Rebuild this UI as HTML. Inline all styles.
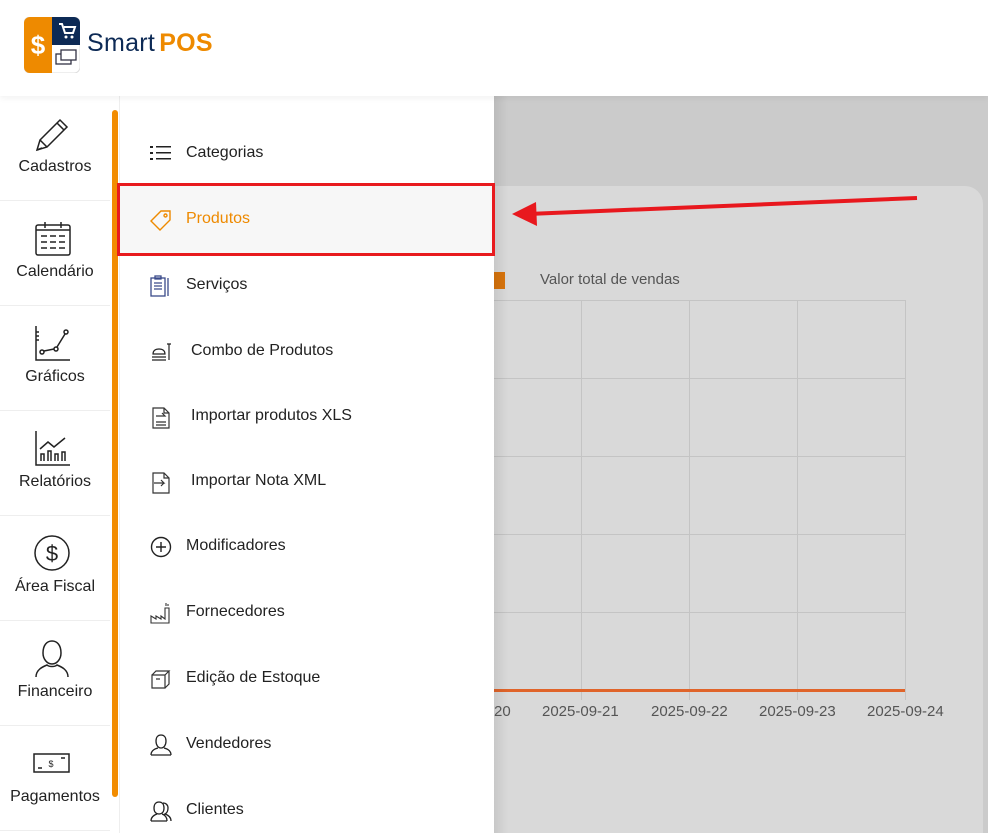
<!DOCTYPE html>
<html><head><meta charset="utf-8"><style>
*{margin:0;padding:0;box-sizing:border-box}
html{overflow:hidden}
body{width:988px;height:833px;overflow:hidden;background:#cbcbcb;font-family:"Liberation Sans",sans-serif;position:relative}
.hdr{position:absolute;left:0;top:0;width:988px;height:96px;background:#fff;box-shadow:0 2px 6px rgba(0,0,0,.06);z-index:3}
.side{position:absolute;left:0;top:96px;width:120px;height:737px;background:#fff;z-index:2;border-right:1px solid #eee}
.si{position:absolute;left:0;width:110px;height:105px;border-bottom:1px solid #eee;text-align:center;color:#222;font-size:16px}
.si svg{position:absolute;left:33px;top:18px}
.si span{position:absolute;left:0;right:0;top:62px}
.bar{position:absolute;left:112px;top:14px;width:6px;height:687px;background:#f28c00;border-radius:3px}
.sub{position:absolute;left:120px;top:96px;width:374px;height:737px;background:#fff;z-index:2}
.it{position:absolute;left:0;width:374px;height:66px;font-size:16px;color:#222}
.it svg{position:absolute;left:30px;top:23px}
.it span{position:absolute;left:66px;top:24px}
.card{position:absolute;left:300px;top:186px;width:683px;height:647px;background:#d9d9d9;border-radius:18px 18px 0 0}
.shade{position:absolute;left:494px;top:96px;width:14px;height:737px;background:linear-gradient(90deg,rgba(0,0,0,.08),rgba(0,0,0,0));z-index:1}
.lbl{position:absolute;font-size:15px;color:#555;z-index:1}
</style></head><body>
<div class="hdr">
 <svg style="position:absolute;left:24px;top:17px" width="56" height="56" viewBox="0 0 56 56">
  <rect x="0" y="0" width="56" height="56" rx="6" fill="#fff" stroke="#ddd"/>
  <path d="M6 0H28V56H6A6 6 0 0 1 0 50V6A6 6 0 0 1 6 0Z" fill="#ee8a00"/>
  <path d="M28 0H50A6 6 0 0 1 56 6V28H28Z" fill="#0d2a55"/>
  <text x="14" y="37" font-size="26" font-weight="bold" fill="#fff" text-anchor="middle" font-family="Liberation Sans">$</text>
  <path d="M35 7h3l3 9h8l2-6h-11" stroke="#fff" stroke-width="2" fill="none"/>
  <circle cx="42" cy="20" r="1.5" fill="#fff"/><circle cx="48" cy="20" r="1.5" fill="#fff"/>
  <rect x="32" y="37" width="15" height="10" fill="none" stroke="#334" stroke-width="1.3"/>
  <rect x="37" y="33" width="15" height="10" fill="#fff" stroke="#334" stroke-width="1.3"/>
 </svg>
 <div style="position:absolute;left:87px;top:29px;font-size:25px;color:#0d2a55;letter-spacing:0.3px">Smart<b style="color:#ee8a00;margin-left:4px">POS</b></div>
</div>
<div class="shade"></div>
<div class="card"></div>
<svg style="position:absolute;left:494px;top:260px" width="494" height="470">
 <rect x="0" y="12" width="11" height="17" fill="#d8740c"/>
 <g stroke="#c4c4c4" stroke-width="1">
  <line x1="0" y1="40.5" x2="411" y2="40.5"/><line x1="0" y1="118.5" x2="411" y2="118.5"/>
  <line x1="0" y1="196.5" x2="411" y2="196.5"/><line x1="0" y1="274.5" x2="411" y2="274.5"/>
  <line x1="0" y1="352.5" x2="411" y2="352.5"/>
  <line x1="87.5" y1="40" x2="87.5" y2="440"/><line x1="195.5" y1="40" x2="195.5" y2="440"/>
  <line x1="303.5" y1="40" x2="303.5" y2="440"/><line x1="411.5" y1="40" x2="411.5" y2="440"/>
 </g>
 <line x1="0" y1="430.5" x2="411" y2="430.5" stroke="#e0642a" stroke-width="3"/>
</svg>
<div class="lbl" style="left:540px;top:271px">Valor total de vendas</div>
<div class="lbl" style="left:494px;top:703px">20</div>
<div class="lbl" style="left:542px;top:703px">2025-09-21</div>
<div class="lbl" style="left:651px;top:703px">2025-09-22</div>
<div class="lbl" style="left:759px;top:703px">2025-09-23</div>
<div class="lbl" style="left:867px;top:703px">2025-09-24</div>
<svg style="position:absolute;left:500px;top:190px;z-index:4" width="430" height="40">
 <line x1="417" y1="8" x2="28" y2="24" stroke="#e8181e" stroke-width="4"/>
 <polygon points="12,24 36,12 37,36" fill="#e8181e"/>
</svg>
<div class="side">
 <div class="si" style="top:0"><svg width="40" height="40" viewBox="0 0 40 40" fill="none" stroke="#222" stroke-width="1.5"><path d="M4 36l3-10L27 6l7 7L14 33z"/><path d="M24 9l7 7M7 26l7 7M4 36l5-2"/></svg><span>Cadastros</span></div>
 <div class="si" style="top:105px"><svg width="40" height="40" viewBox="0 0 40 40" fill="none" stroke="#222" stroke-width="1.5"><rect x="3" y="6" width="34" height="30" rx="2"/><path d="M3 11h34M12 3v6M28 3v6M8 17h6M17 17h6M26 17h6M8 23h6M17 23h6M26 23h6M8 29h6M17 29h6M26 29h6"/></svg><span>Calendário</span></div>
 <div class="si" style="top:210px"><svg width="40" height="40" viewBox="0 0 40 40" fill="none" stroke="#222" stroke-width="1.5"><path d="M3 2v34h34M3 8h3M3 12h3M3 16h3"/><circle cx="9" cy="28" r="2"/><circle cx="23" cy="25" r="2"/><circle cx="33" cy="8" r="2"/><path d="M11 27l10-2M24 23l8-13"/></svg><span>Gráficos</span></div>
 <div class="si" style="top:315px"><svg width="40" height="40" viewBox="0 0 40 40" fill="none" stroke="#222" stroke-width="1.5"><path d="M3 2v34h34M8 32v-7h3v7M15 32v-10h3v10M22 32v-7h3v7M29 32v-9h3v9M7 20l8-7 6 5 11-9"/></svg><span>Relatórios</span></div>
 <div class="si" style="top:420px"><svg width="40" height="40" viewBox="0 0 40 40" fill="none" stroke="#222" stroke-width="1.5"><circle cx="19" cy="19" r="17"/><text x="19" y="27" font-size="22" fill="#222" stroke="none" text-anchor="middle" font-family="Liberation Sans">$</text></svg><span>Área Fiscal</span></div>
 <div class="si" style="top:525px"><svg width="40" height="40" viewBox="0 0 40 40" fill="none" stroke="#222" stroke-width="1.5"><path d="M10 14c0-8 4-12 9-12s9 4 9 12c0 6-4 11-9 11s-9-5-9-11zM3 38c0-7 6-10 11-12 2 2 8 2 10 0 5 2 11 5 11 12"/></svg><span>Financeiro</span></div>
 <div class="si" style="top:630px"><svg width="40" height="40" viewBox="0 0 40 40" fill="none" stroke="#222" stroke-width="1.5"><rect x="1" y="10" width="35" height="18"/><path d="M5 24h4M28 14h4"/><text x="18" y="23" font-size="9" fill="#222" stroke="none" text-anchor="middle">$</text></svg><span>Pagamentos</span></div>
 <div class="bar"></div>
</div>
<div class="sub">
 <div class="it" style="top:24px"><svg width="22" height="20" viewBox="0 0 22 20" fill="#222"><rect x="0" y="3" width="3" height="2"/><rect x="0" y="9" width="3" height="2"/><rect x="0" y="15" width="3" height="2"/><rect x="6" y="3" width="15" height="1.5"/><rect x="6" y="9" width="15" height="1.5"/><rect x="6" y="15" width="15" height="1.5"/></svg><span>Categorias</span></div>
 <div style="position:absolute;left:-3px;top:87px;width:378px;height:73px;border:3px solid #e81a1e;background:#f7f7f7"></div>
 <div class="it" style="top:90px"><svg width="22" height="22" viewBox="0 0 22 22" fill="none" stroke="#ee8a00" stroke-width="1.4"><path d="M1 12L11 2h9v9L10 21z"/><circle cx="15.5" cy="6.5" r="1.5"/></svg><span style="color:#ee8a00">Produtos</span></div>
 <div class="it" style="top:156px"><svg width="22" height="22" viewBox="0 0 22 22" fill="none" stroke="#3a4a8a" stroke-width="1.3"><rect x="1" y="3" width="14" height="18"/><rect x="5" y="1" width="6" height="3"/><path d="M4 8h8M4 11h8M4 14h8M18 3v18"/></svg><span>Serviços</span></div>
 <div class="it" style="top:222px"><svg width="22" height="22" viewBox="0 0 22 22" fill="none" stroke="#222" stroke-width="1.2"><path d="M2 19h14M2 16h14M3 13c0-3 2-5 6-5s6 2 6 5zM19 3v16M17 3h4"/></svg><span style="left:71px">Combo de Produtos</span></div>
 <div class="it" style="top:287px"><svg width="22" height="24" viewBox="0 0 22 24" fill="none" stroke="#333" stroke-width="1.2"><path d="M3 2h11l5 5v15H3zM14 2v5h5M6 10h9l-3-3M6 16h10M6 19h10"/></svg><span style="left:71px">Importar produtos XLS</span></div>
 <div class="it" style="top:352px"><svg width="22" height="24" viewBox="0 0 22 24" fill="none" stroke="#333" stroke-width="1.2"><path d="M3 2h11l5 5v15H3zM14 2v5h5M4 12h10l-3-3M14 12l-3 3"/></svg><span style="left:71px">Importar Nota XML</span></div>
 <div class="it" style="top:417px"><svg width="22" height="22" viewBox="0 0 22 22" fill="none" stroke="#222" stroke-width="1.4"><circle cx="11" cy="11" r="9.5"/><path d="M11 6v10M6 11h10"/></svg><span>Modificadores</span></div>
 <div class="it" style="top:483px"><svg width="22" height="22" viewBox="0 0 22 22" fill="none" stroke="#333" stroke-width="1.1"><path d="M1 21V14l5 3v-3l5 3v-3l4 3V6h4v15zM16 4v-3M18 4v-2"/></svg><span>Fornecedores</span></div>
 <div class="it" style="top:549px"><svg width="22" height="22" viewBox="0 0 22 22" fill="none" stroke="#333" stroke-width="1.2"><path d="M2 7h13v13H2zM2 7l4-4h13l-4 4M19 3v13l-4 4M6 11h4"/></svg><span>Edição de Estoque</span></div>
 <div class="it" style="top:615px"><svg width="22" height="22" viewBox="0 0 22 22" fill="none" stroke="#222" stroke-width="1.3"><path d="M6 7c0-4 2-6 5-6s5 2 5 6-2 7-5 7-5-3-5-7zM1 21c0-4 3-6 7-7M21 21c0-4-3-6-7-7M1 21h20"/></svg><span>Vendedores</span></div>
 <div class="it" style="top:681px"><svg width="22" height="22" viewBox="0 0 22 22" fill="none" stroke="#222" stroke-width="1.3"><path d="M4 8c0-4 2-6 5-6s5 2 5 6-2 6-5 6-5-2-5-6zM1 21c0-4 3-6 6-7M17 21c0-4-2-6-5-7M1 21h16M13 3c3 0 5 2 5 5s-1 5-3 6c3 1 6 3 6 7"/></svg><span>Clientes</span></div>
</div>
</body></html>
